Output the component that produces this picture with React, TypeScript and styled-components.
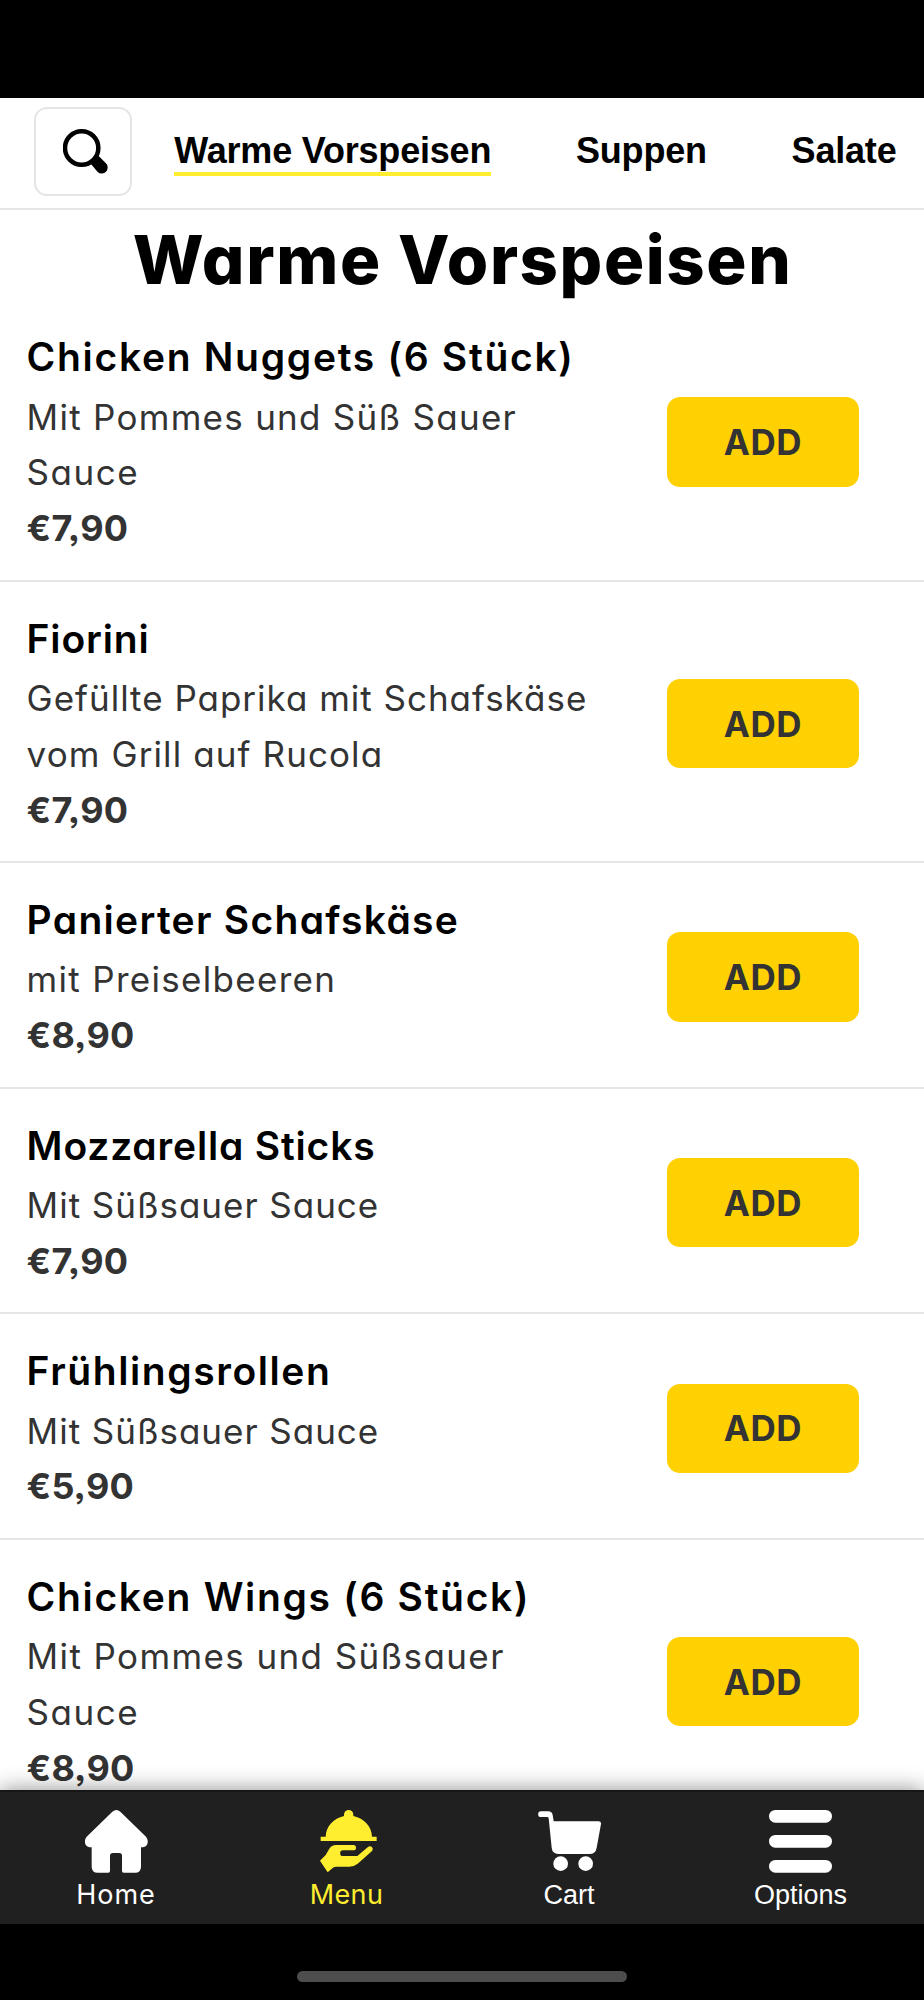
import React from "react";
import styled, { createGlobalStyle } from "styled-components";

const GlobalStyle = createGlobalStyle`
  *, *::before, *::after { box-sizing: border-box; }
  body { margin: 0; background: #000; }
`;

const brandFont = `"Inter", "Open Sans", sans-serif`;
const systemFont = `"Liberation Sans", Arial, sans-serif`;

const Screen = styled.div`
  display: flex;
  flex-direction: column;
  width: 924px;
  height: 2000px;
  overflow: hidden;
  background: #000;
  font-family: ${brandFont};
  font-feature-settings: "cv11" 1, "ss03" 1;
`;

const StatusBar = styled.div`
  flex: none;
  height: 98.4px;
`;

const CategoryBar = styled.header`
  flex: none;
  display: flex;
  align-items: flex-start;
  height: 111.4px;
  padding: 9px 0 0 34px;
  background: #fff;
  border-bottom: 2px solid #e5e5e5;
  overflow: hidden;
`;

const SearchButton = styled.button`
  flex: none;
  display: flex;
  align-items: center;
  justify-content: center;
  width: 98px;
  height: 89px;
  padding: 0 0 0 4px;
  background: #fff;
  border: 2px solid #e5e5e5;
  border-radius: 13px;
`;

const Tabs = styled.nav`
  display: flex;
  gap: 84.8px;
  padding: 21px 0 0 42.3px;
`;

const Tab = styled.a<{ $active?: boolean }>`
  flex: none;
  height: 48px;
  font: 700 36px/46px ${systemFont};
  letter-spacing: -0.2px;
  white-space: nowrap;
  color: #000;
  border-bottom: 4px solid ${(p) => (p.$active ? "#ffed2f" : "transparent")};
`;

const Content = styled.main`
  flex: 1;
  min-height: 0;
  overflow: hidden;
  background: #fff;
`;

const CategoryTitle = styled.h1`
  margin: 0;
  height: 90.5px;
  padding-left: 1px;
  font-size: 67px;
  font-weight: 800;
  line-height: 99px;
  letter-spacing: 1.6px;
  text-align: center;
  white-space: nowrap;
  color: #000;
`;

const Dish = styled.article`
  display: flex;
  align-items: center;
  justify-content: space-between;
  padding: 25px 65px 22.6px 26.6px;
  border-bottom: 2px solid #e5e5e5;
`;

const DishText = styled.div`
  flex: none;
`;

const DishName = styled.h2<{ $track: number }>`
  margin: 0;
  font-size: 39px;
  font-weight: 600;
  line-height: 64.4px;
  letter-spacing: ${(p) => p.$track}px;
  white-space: nowrap;
  color: #000;
`;

const DishLine = styled.p<{ $track: number }>`
  margin: 0;
  font-size: 35px;
  line-height: 55.8px;
  letter-spacing: ${(p) => p.$track}px;
  white-space: nowrap;
  color: #333;
`;

const Price = styled.p`
  margin: 0;
  font-size: 36px;
  font-weight: 700;
  line-height: 55.8px;
  letter-spacing: 0.3px;
  color: #333;
`;

const AddButton = styled.button`
  flex: none;
  width: 192px;
  height: 89.4px;
  margin-top: 2px;
  padding: 0;
  border: 0;
  border-radius: 13px;
  background: #ffd103;
  color: #333;
  font-family: inherit;
  font-size: 35px;
  font-weight: 700;
  letter-spacing: 0.6px;
`;

const BottomNav = styled.nav`
  flex: none;
  position: relative;
  display: grid;
  grid-template-columns: 232px 229px 216px 247px;
  height: 133.7px;
  padding-top: 18px;
  background: #202020;
  border-top: 2px solid #161616;
  box-shadow: 0 0 21px rgba(0, 0, 0, 0.45);
`;

const NavItem = styled.a<{ $active?: boolean }>`
  display: flex;
  flex-direction: column;
  align-items: center;
  color: ${(p) => (p.$active ? "#ffed2f" : "#fff")};
`;

const NavLabel = styled.span<{ $system?: boolean; $track?: number }>`
  margin-top: 4px;
  font-family: ${(p) => (p.$system ? systemFont : brandFont)};
  font-size: 27px;
  line-height: 36px;
  letter-spacing: ${(p) => p.$track ?? 0}px;
`;

const HomeArea = styled.footer`
  flex: none;
  display: flex;
  justify-content: center;
  height: 76.3px;
  padding-top: 47.3px;
`;

const HomeIndicator = styled.div`
  width: 330px;
  height: 11px;
  border-radius: 6px;
  background: #4d4d4d;
`;

const SearchIcon = () => (
  <svg width="45" height="45" viewBox="98 88 135 135">
    <circle cx="154" cy="145" r="50" fill="none" stroke="#000" strokeWidth="13.5" />
    <path d="M180 191 L205 169 L226 190 A18 18 0 0 1 202 217 Z" fill="#000" />
  </svg>
);

const HomeIcon = () => (
  <svg width="63" height="63" viewBox="0 0 189 189" fill="currentColor">
    <path d="M82 5Q94-5 106 5L183 80Q192 92 186 104Q181 112 168 112V170Q168 188 150 188H116Q111 188 111 183V137Q111 129 103 129H84Q75 129 75 137V183Q75 188 70 188H38Q20 188 20 170V112Q7 112 2 104Q-4 92 5 80Z" />
  </svg>
);

const MenuIcon = () => (
  <svg width="63" height="63" viewBox="135 120 189 189" fill="currentColor">
    <path d="M222 138V134A14 14 0 0 1 250 134V138C283 145 305 170 306 200H320V213H152V200H167C168 170 190 145 222 138Z" />
    <path d="M150 272L167 255L178 236Q185 225 198 225H250A8 8 0 0 1 250 241H219A8.500 8.500 0 0 0 219 258H262L294 231A8.500 8.500 0 0 1 306 243L263 281Q252 290 238 290H199Q193 290 189 293L173 307Z" />
  </svg>
);

const CartIcon = () => (
  <svg width="63" height="63" viewBox="113 120 189 189" fill="currentColor">
    <path d="M122 124H144Q155 124 157 135L160 154H295Q303 154 302 162L289 233Q286 252 267 252H177Q156 252 154 233L145 145Q144 141 140 141H122A8.500 8.500 0 0 1 122 124Z" />
    <circle cx="181" cy="281" r="22" />
    <circle cx="256" cy="281" r="22" />
  </svg>
);

const OptionsIcon = () => (
  <svg width="63" height="63" viewBox="0 0 189 189" fill="currentColor">
    <rect width="189" height="38" rx="19" />
    <rect y="75" width="189" height="38" rx="19" />
    <rect y="150" width="189" height="38" rx="19" />
  </svg>
);

type Tracked = [text: string, track: number];

const dishes: { name: Tracked; lines: Tracked[]; price: string }[] = [
  { name: ["Chicken Nuggets (6 Stück)", 1.7], lines: [["Mit Pommes und Süß Sauer", 1.27], ["Sauce", 1.5]], price: "€7,90" },
  { name: ["Fiorini", 0.83], lines: [["Gefüllte Paprika mit Schafskäse", 0.98], ["vom Grill auf Rucola", 1.1]], price: "€7,90" },
  { name: ["Panierter Schafskäse", 1.3], lines: [["mit Preiselbeeren", 1.3]], price: "€8,90" },
  { name: ["Mozzarella Sticks", 0.83], lines: [["Mit Süßsauer Sauce", 0.97]], price: "€7,90" },
  { name: ["Frühlingsrollen", 1.58], lines: [["Mit Süßsauer Sauce", 0.97]], price: "€5,90" },
  { name: ["Chicken Wings (6 Stück)", 1.68], lines: [["Mit Pommes und Süßsauer", 1.39], ["Sauce", 1.5]], price: "€8,90" },
];

export default function App() {
  return (
    <>
      <GlobalStyle />
      <Screen>
        <StatusBar />
        <CategoryBar>
          <SearchButton aria-label="Suche">
            <SearchIcon />
          </SearchButton>
          <Tabs>
            <Tab $active>Warme Vorspeisen</Tab>
            <Tab>Suppen</Tab>
            <Tab>Salate</Tab>
          </Tabs>
        </CategoryBar>
        <Content>
          <CategoryTitle>Warme Vorspeisen</CategoryTitle>
          {dishes.map((dish) => (
            <Dish key={dish.name[0]}>
              <DishText>
                <DishName $track={dish.name[1]}>{dish.name[0]}</DishName>
                {dish.lines.map(([text, track]) => (
                  <DishLine key={text} $track={track}>
                    {text}
                  </DishLine>
                ))}
                <Price>{dish.price}</Price>
              </DishText>
              <AddButton>ADD</AddButton>
            </Dish>
          ))}
        </Content>
        <BottomNav>
          <NavItem>
            <HomeIcon />
            <NavLabel $track={1}>Home</NavLabel>
          </NavItem>
          <NavItem $active>
            <MenuIcon />
            <NavLabel $track={0.4}>Menu</NavLabel>
          </NavItem>
          <NavItem>
            <CartIcon />
            <NavLabel $system>Cart</NavLabel>
          </NavItem>
          <NavItem>
            <OptionsIcon />
            <NavLabel $system>Options</NavLabel>
          </NavItem>
        </BottomNav>
        <HomeArea>
          <HomeIndicator />
        </HomeArea>
      </Screen>
    </>
  );
}
